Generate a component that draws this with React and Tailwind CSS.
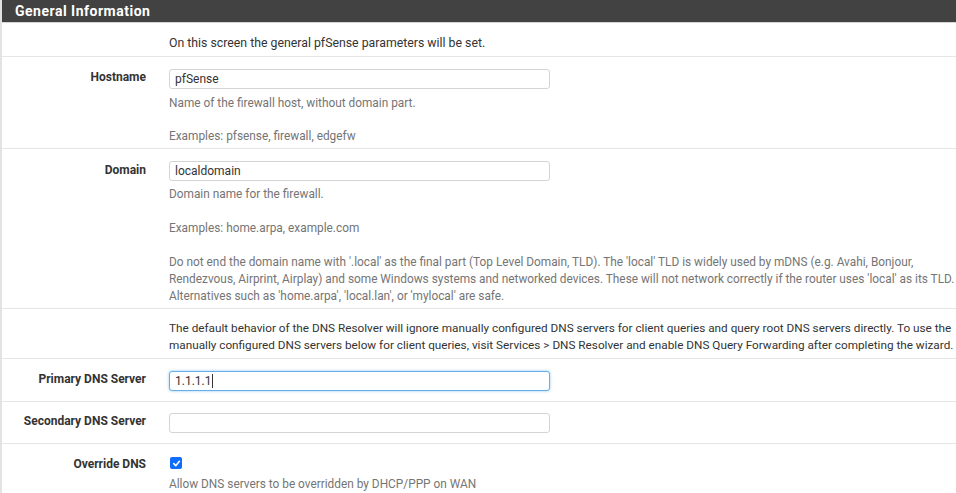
import React from "react";

const font = { fontFamily: "Roboto, 'Noto Sans', sans-serif" };

function Row({ label, children, className = "" }) {
  return (
    <div className={`flex border-b border-[#e6e6e6] ${className}`}>
      <div className="w-[152px] shrink-0 pr-[8px] text-right font-bold text-[12px] leading-[17px] text-[#333]">
        {label}
      </div>
      <div className="pl-[15px] flex-1 min-w-0">{children}</div>
    </div>
  );
}

function Input({ value, focus }) {
  return (
    <div
      className={`w-[381px] h-[20px] rounded-[3px] bg-white border flex items-center px-[5px] text-[12px] text-[#333] ${
        focus
          ? "border-[#66afe9] shadow-[0_0_3px_rgba(102,175,233,0.7)]"
          : "border-[#d4d4d4]"
      }`}
    >
      {value}
      {focus && <span className="inline-block w-px h-[14px] bg-[#333] ml-px" />}
    </div>
  );
}

const help = "text-[11.85px] leading-[17px] text-[#757575]";

export default function App() {
  return (
    <div className="w-[1100px] bg-white overflow-hidden" style={font}>
      <div className="h-[493px] border-l-2 border-[#e3e3e3] w-[1100px]">
        <div className="h-[22px] bg-[#424242] flex items-center pl-[13px] border-b border-[#d6d6d6] box-content">
          <span className="text-white font-bold text-[14px] tracking-[0.5px]">General Information</span>
        </div>
        <div className="flex border-b border-[#e6e6e6] pt-[12px] pb-[4px]">
          <div className="w-[152px] shrink-0" />
          <div className="pl-[15px] text-[12.3px] leading-[17px] text-[#333]">
            On this screen the general pfSense parameters will be set.
          </div>
        </div>
        <Row label={<div className="pt-[11px]">Hostname</div>} className="pt-[1px] pb-[3px]">
          <div className="pt-[11px]">
            <Input value="pfSense" />
            <div className={`${help} mt-[6px]`}>Name of the firewall host, without domain part.</div>
            <div className={`${help} mt-[16px]`}>Examples: pfsense, firewall, edgefw</div>
          </div>
        </Row>
        <Row label={<div className="pt-[13px]">Domain</div>} className="pt-[0px] pb-[3px]">
          <div className="pt-[12px]">
            <Input value="localdomain" />
            <div className={`${help} mt-[5px]`}>Domain name for the firewall.</div>
            <div className={`${help} mt-[17px]`}>Examples: home.arpa, example.com</div>
            <div className={`${help} mt-[17px] w-[795px]`}>
              Do not end the domain name with '.local' as the final part (Top Level Domain, TLD). The 'local' TLD is widely used by mDNS (e.g. Avahi, Bonjour, Rendezvous, Airprint, Airplay) and some Windows systems and networked devices. These will not network correctly if the router uses 'local' as its TLD. Alternatives such as 'home.arpa', 'local.lan', or 'mylocal' are safe.
            </div>
          </div>
        </Row>
        <div className="flex border-b border-[#e6e6e6] pt-[11px] pb-[4px]">
          <div className="w-[152px] shrink-0" />
          <div className="pl-[15px] w-[805px] shrink-0 text-[11.75px] leading-[17px] text-[#333]">
            The default behavior of the DNS Resolver will ignore manually configured DNS servers for client queries and query root DNS servers directly. To use the manually configured DNS servers below for client queries, visit Services &gt; DNS Resolver and enable DNS Query Forwarding after completing the wizard.
          </div>
        </div>
        <Row label={<div className="pt-[12px]">Primary DNS Server</div>} className="pb-[10px]">
          <div className="pt-[12px]">
            <Input value="1.1.1.1" focus />
          </div>
        </Row>
        <Row label={<div className="pt-[11px]">Secondary DNS Server</div>} className="pb-[10px]">
          <div className="pt-[11px]">
            <Input value="" />
          </div>
        </Row>
        <Row label={<div className="pt-[12px]">Override DNS</div>} className="border-b-0">
          <div className="pt-[13px]">
            <div className="w-[12px] h-[12px] ml-[1px] rounded-[2px] bg-[#0d6efd] flex items-center justify-center">
              <svg width="9" height="9" viewBox="0 0 10 10">
                <path d="M2 5.2 L4.2 7.4 L8.2 2.6" fill="none" stroke="white" strokeWidth="1.8" strokeLinecap="round" strokeLinejoin="round" />
              </svg>
            </div>
            <div className={`${help} mt-[7px]`}>Allow DNS servers to be overridden by DHCP/PPP on WAN</div>
          </div>
        </Row>
      </div>
    </div>
  );
}
